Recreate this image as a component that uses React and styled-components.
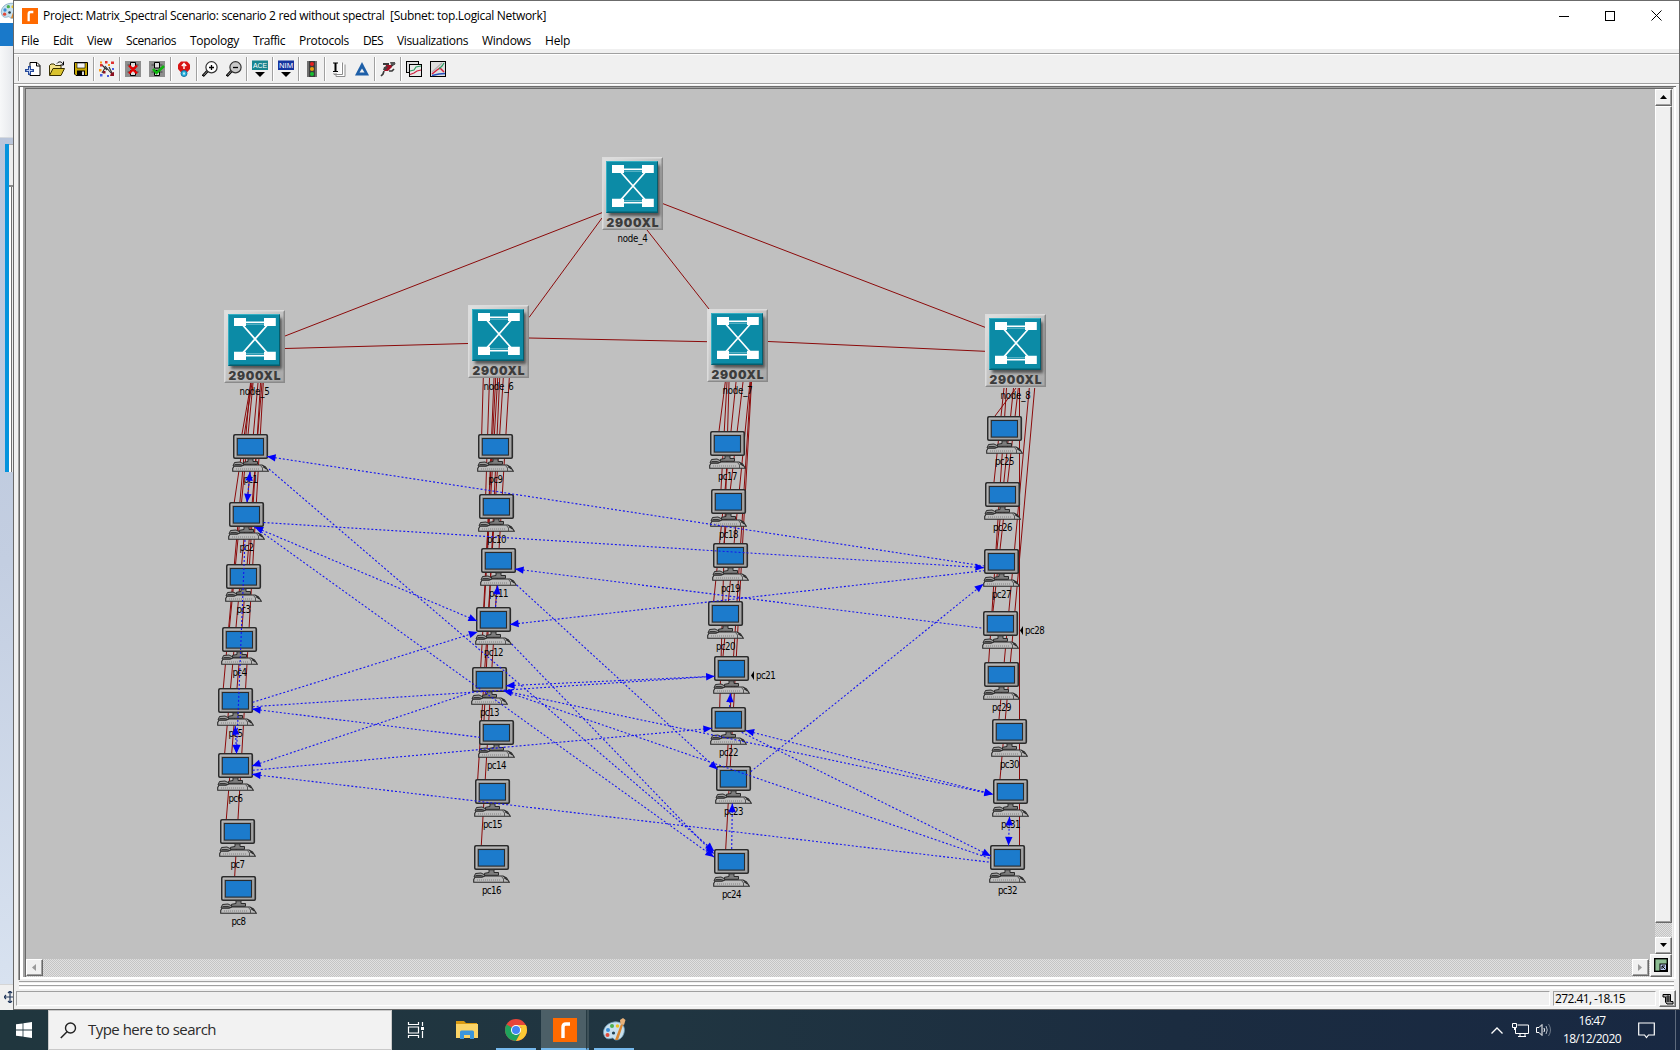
import React, { useLayoutEffect, useRef, useState } from "react";
import styled, { createGlobalStyle, css } from "styled-components";

const UI = `"Open Sans", "Noto Sans", sans-serif`;

const GlobalStyle = createGlobalStyle`
  * { box-sizing: border-box; }
  html, body { margin: 0; padding: 0; overflow: hidden; }
  body { font-family: ${UI}; font-size: 12px; color: #000; }
  svg { display: block; flex: none; }
`;

/* ---------- text that is tracked to a given width ---------- */

const FitSpan = styled.span`
  display: inline-block;
  white-space: pre;
  line-height: 1.15;
`;

function Fit({ w, children }) {
  const ref = useRef(null);
  const [spacing, setSpacing] = useState(0);
  useLayoutEffect(() => {
    const natural = ref.current.getBoundingClientRect().width;
    setSpacing((w - natural) / children.length);
  }, []);
  return (
    <FitSpan ref={ref} style={{ letterSpacing: `${spacing}px` }}>
      {children}
    </FitSpan>
  );
}

/* ---------- desktop ---------- */

const Desktop = styled.div`
  width: 1680px;
  height: 1050px;
  display: flex;
  flex-direction: column;
  background: #f0f0f0;
`;

const Stage = styled.div`
  height: 1010px;
  display: flex;
`;

const Behind = styled.div`
  width: 13px;
  display: flex;
  flex-direction: column;
  overflow: hidden;
`;
const BehindTitle = styled.div`
  height: 23px;
  background: #fff;
`;
const BehindTab = styled.div`
  height: 23px;
  background: #1979ca;
`;
const BehindRibbon = styled.div`
  height: 92px;
  background: linear-gradient(90deg, #f7f8f9, #e6e8ec);
  border-bottom: 1px solid #d5d9de;
`;
const BehindCanvas = styled.div`
  flex: 1;
  padding: 6px 0 0 5px;
  background: linear-gradient(#b9c5da, #c3cee1 50%, #d8e2f0);
`;
const BehindImage = styled.div`
  height: 328px;
  display: flex;
  flex-direction: column;
  border-left: 4px solid #0493dd;
  background: linear-gradient(90deg, #fff 0 2px, #6f6f6f 2px 3px, #f0f0f0 3px 4px);
`;
const BehindImageTop = styled.div`
  height: 43px;
  background: #ededed;
  border-bottom: 2px solid #888;
  border-top: 1px solid #aaa;
`;
const BehindStatus = styled.div`
  height: 26px;
  background: #f0f0f0;
  border-top: 1px solid #d5d5d5;
  padding: 6px 0 0 4px;
`;

/* ---------- window ---------- */

const Win = styled.div`
  width: 1667px;
  display: flex;
  flex-direction: column;
  border: 1px solid #6b6b6b;
  background: #f0f0f0;
`;
const TitleBar = styled.div`
  height: 29px;
  display: flex;
  align-items: center;
  padding-left: 8px;
  background: #fff;
`;
const TitleText = styled.div`
  flex: 1;
  padding: 1px 0 0 5px;
  display: flex;
`;
const Caption = styled.div`
  width: 46px;
  display: flex;
  justify-content: center;
`;
const MenuBar = styled.div`
  height: 19px;
  display: flex;
  padding: 4px 0 0 7px;
  gap: 14px;
  background: #fff;
`;
const Bar = styled.div`
  height: 32px;
  margin: 4px 0 1px;
  border-top: 1px solid #a0a0a0;
  border-bottom: 1px solid #fff;
  box-shadow: inset 0 1px #fff, inset 0 -1px #a0a0a0;
  display: flex;
  align-items: center;
  padding-left: 4px;
`;
const Group = styled.div`
  height: 24px;
  width: ${(p) => p.$w}px;
  display: flex;
  align-items: center;
  gap: 8px;
  padding-left: ${(p) => (p.$first ? 6 : 5)}px;
  border-left: 1px solid #a0a0a0;
  box-shadow: inset 1px 0 #fff;
`;

const Frame = styled.div`
  height: 894px;
  margin: 0 3px 0 4px;
  display: flex;
  flex-direction: column;
  border-left: 1px solid #a0a0a0;
  border-top: 1px solid #6b6b6b;
  box-shadow: inset 1px 0 #696969;
`;
const FrameInner = styled.div`
  height: 892px;
  margin-left: 1px;
  padding-left: 3px;
  border-right: 2px solid #fff;
  border-bottom: 2px solid #fff;
  display: flex;
  background: #fff;
`;
const Sunken = styled.div`
  flex: 1;
  display: grid;
  grid-template-columns: 1fr 17px;
  grid-template-rows: 1fr 18px;
  border-left: 2px solid #a0a0a0;
  border-top: 1px solid #a0a0a0;
  border-right: 1px solid #e3e3e3;
  box-shadow: inset 1px 0 #696969, inset 0 1px #696969;
  padding: 1px 1px 0 1px;
  background: #f0f0f0;
`;
const Rails = styled.div`
  height: 9px;
  margin: 0 5px 0 5px;
  padding-top: 1px;
`;
const Rail = styled.div`
  height: 4px;
  border-top: 1px solid #a0a0a0;
  border-bottom: 2px solid #fff;
`;

const checker = css`
  background: repeating-conic-gradient(#c4c4c4 0 25%, #e0e0e0 0 50%) 0 0 / 2px 2px;
`;
const VScroll = styled.div`
  display: flex;
  flex-direction: column;
  ${checker}
`;
const HScroll = styled.div`
  display: flex;
  justify-content: space-between;
  padding-right: 6px;
  ${checker}
`;
const raised = css`
  background: #f0f0f0;
  border: 1px solid #fff;
  border-right-color: #696969;
  border-bottom-color: #696969;
  box-shadow: inset -1px -1px #a0a0a0;
`;
const ArrowButton = styled.div`
  width: 17px;
  height: 17px;
  display: flex;
  align-items: center;
  justify-content: center;
  padding: 0 1px 1px 0;
  ${raised}
`;
const Thumb = styled.div`
  height: 817px;
  margin-bottom: 14px;
  ${raised}
`;
const Corner = styled.div`
  width: 22px;
  height: 23px;
  margin: -5px 0 0 -5px;
  display: flex;
  align-items: center;
  justify-content: center;
  padding: 0 1px 2px 0;
  z-index: 1;
  ${raised}
`;

const StatusRow = styled.div`
  height: 17px;
  margin-top: 2px;
  padding-left: 2px;
  display: flex;
  gap: 3px;
`;
const StatusCell = styled.div`
  height: 15px;
  width: ${(p) => p.$w}px;
  padding: 0 0 0 1px;
  display: flex;
  align-items: center;
  border: 1px solid #a0a0a0;
  border-right-color: #fff;
  border-bottom-color: #fff;
`;
const StatusButton = styled.div`
  width: 17px;
  height: 17px;
  margin: -1px 0 0 0;
  display: flex;
  align-items: center;
  justify-content: center;
  ${raised}
`;

/* ---------- network canvas ---------- */

const Canvas = styled.div`
  position: relative;
  background: #c0c0c0;
  overflow: hidden;
`;
const Layer = styled.svg`
  position: absolute;
  left: 0;
  top: 0;
`;
const Place = styled.div.attrs((p) => ({ style: { left: p.$x - 26, top: p.$y - 89 } }))`
  position: absolute;
  width: ${(p) => p.$w}px;
  display: flex;
  flex-direction: column;
  align-items: center;
`;
const NodeLabel = styled.div`
  margin-top: ${(p) => p.$top}px;
  font: 9.6px/1 "DejaVu Sans Condensed", "DejaVu Sans", sans-serif;
  white-space: nowrap;
`;
const SideLabel = styled.div`
  position: absolute;
  left: 38px;
  top: 14px;
  display: flex;
  align-items: center;
  gap: 2px;
  font: 9.6px/1 "DejaVu Sans Condensed", "DejaVu Sans", sans-serif;
`;

const SWITCHES = [
  ["node_4", 602, 157],
  ["node_5", 224, 310],
  ["node_6", 468, 305],
  ["node_7", 707, 309],
  ["node_8", 985, 314],
];

const PCS = [
  [232, 434], [228, 502], [225, 564], [221, 627], [217, 688], [217, 753], [219, 819], [220, 876],
  [477, 434], [478, 494], [480, 548], [475, 607], [471, 667], [478, 720], [474, 779], [473, 845],
  [709, 431], [710, 489], [712, 543], [707, 601], [713, 656], [710, 707], [715, 766], [713, 849],
  [986, 416], [984, 482], [983, 549], [982, 611], [983, 662], [991, 719], [992, 779], [989, 845],
];

const LINKS = [
  [285, 336, 602, 212.7], [529, 317.5, 602, 218], [285, 348.5, 468, 343.5],
  [529, 338, 707, 341.7], [768, 341.5, 985, 351.3], [647, 230, 709, 309], [663, 203.7, 985, 327.3],
  [251, 383, 242, 434], [252, 383, 234.3, 502], [260.5, 383, 249.5, 564], [253, 383, 229.5, 627],
  [250.5, 383, 223.3, 688], [258, 383, 224.7, 753], [262, 383, 226.3, 819], [263.3, 383, 234.7, 876],
  [483.3, 378, 481.7, 434], [489.5, 378, 485.7, 494], [494, 378, 487, 548], [495.7, 378, 483.7, 607],
  [497.7, 378, 480.7, 667], [499.7, 378, 484, 720], [503.3, 378, 477.7, 779], [509.3, 378, 481.3, 845],
  [725.3, 382, 719, 431], [727, 382, 721, 489], [743, 382, 724, 543], [736, 382, 713.7, 601],
  [750, 382, 723, 656], [729, 382, 719.7, 707], [750.8, 382, 726.7, 766], [751.5, 382, 725.7, 849],
  [1016, 388, 995, 416], [1004, 388, 994, 482], [1013.5, 388, 997, 549], [1018.3, 388, 993, 611],
  [1006.5, 388, 988.7, 662], [1029.3, 388, 999, 719], [1034.7, 388, 1000, 779], [1019.5, 388, 1019.5, 845],
];

/* x1, y1, x2, y2, arrow heads: "s" at the start, "e" at the end, "b" at both */
const FLOWS = [
  [267, 456.5, 984, 566, "s"], [269, 469, 714, 851, "e"], [250, 472, 247, 502.5, "b"],
  [263.5, 522.5, 984, 567.7, "e"], [254.5, 527, 477, 621, "b"], [254.5, 527, 714, 857, "e"],
  [245, 540, 236.5, 753.5, "e"], [235.3, 726, 236.5, 753.5, "b"], [252.7, 702.3, 477.5, 632, "e"],
  [252.7, 706.7, 714.7, 676.3, ""], [252, 709, 480, 737.3, "s"], [252, 766, 473.3, 691.7, "s"],
  [252.7, 770.3, 712, 728.3, "e"], [252, 774.3, 990.7, 862.3, "s"], [495.5, 607, 497.7, 585.5, "e"],
  [515, 569, 983.3, 628.3, "s"], [516.7, 585, 717.5, 769.5, "e"], [510, 624.5, 984, 570.7, "s"],
  [511.7, 644, 714, 854, "e"], [506, 685.7, 714.7, 676.3, "b"], [503.5, 690.8, 993, 794.3, "b"],
  [503.5, 690.8, 990.7, 858.7, ""], [741.7, 732.3, 990.7, 856, "e"], [745.5, 730.5, 993, 794.3, "b"],
  [729.7, 707, 730.3, 693.5, "e"], [750.7, 771.7, 983.3, 584, "e"], [731.7, 849, 732.3, 803.5, "e"],
  [1009.5, 816.7, 1008.5, 845.5, "b"],
];

function Head({ x, y, fx, fy }) {
  const a = (Math.atan2(y - fy, x - fx) * 180) / Math.PI;
  return <path d="M0 0L-8.600 -3.700V3.700Z" fill="#0000fa" transform={`translate(${x} ${y}) rotate(${a})`} />;
}

function SwitchIcon() {
  return (
    <svg width="61" height="73" viewBox="0 0 61 73">
      <defs>
        <linearGradient id="plate" x1="0" y1="0" x2="1" y2="1">
          <stop offset="0" stopColor="#e0e0e0" />
          <stop offset="0.5" stopColor="#c2c2c2" />
          <stop offset="1" stopColor="#a8a8a8" />
        </linearGradient>
        <filter id="soft" x="-20%" y="-20%" width="150%" height="150%">
          <feGaussianBlur stdDeviation="1.6" />
        </filter>
      </defs>
      <rect width="61" height="73" fill="#8a8a8a" />
      <path d="M0 0H61L59 2H2V71L0 73Z" fill="#dcdcdc" />
      <rect x="1.5" y="1.5" width="58" height="70" fill="url(#plate)" />
      <rect x="7" y="8" width="51" height="51" fill="#333" opacity="0.75" filter="url(#soft)" />
      <rect x="4" y="4" width="52" height="52" fill="#055d6d" />
      <path d="M4 4H56L54.5 5.5H5.5V54.5L4 56Z" fill="#35aec2" />
      <rect x="5" y="5" width="50" height="49.5" fill="#0c8ba6" />
      <path d="M22 12.3H40M22 45.7H40" stroke="#fff" strokeWidth="1.4" />
      <path d="M22 14.2H40M22 43.8H40" stroke="#8fd0dc" strokeWidth="0.8" />
      <path d="M16 12L46 46M46 12L16 46" stroke="#fff" strokeWidth="1.7" />
      <path d="M10 8H22V16H10ZM40 8H51.8V16H40ZM10 41.8H22V50H10ZM40 41.8H51.8V50H40Z" fill="#fff" />
      <text x="4.5" y="69.6" textLength="52" lengthAdjust="spacing" fill="#3c3c3c"
        fontFamily="Inter, sans-serif" fontWeight="900" fontSize="12">2900XL</text>
    </svg>
  );
}

function PcIcon() {
  return (
    <svg width="37" height="38" viewBox="0 0 37 38">
      <rect x="1.8" y="0.8" width="33.5" height="23.4" rx="1.2" fill="#a3a3a3" stroke="#2b2b2b" strokeWidth="1.6" />
      <path d="M3.2 23V2.2H34" fill="none" stroke="#c6c6c6" strokeWidth="0.8" />
      <rect x="5.3" y="4.5" width="26.2" height="16.6" fill="#1c7bcc" stroke="#2b2b2b" strokeWidth="1.1" />
      <path d="M1 32L2.500 28.500L8 28L12 30V32Z" fill="#a0a0a0" stroke="#2b2b2b" strokeWidth="1" />
      <path d="M2.500 30.500H8L11 31.500" fill="none" stroke="#2b2b2b" strokeWidth="0.9" />
      <path d="M16 24.800H21V27.500H25.500V30.300H11.500V28.300L16 27.500Z" fill="#7d7d7d" stroke="#2b2b2b" strokeWidth="1" />
      <path d="M0.700 37.300V34.500L2 32.300H9L12 31H30L33.500 33L36.400 37.300Z" fill="#bdbdbd" stroke="#2b2b2b" strokeWidth="1.100" />
      <path d="M28.500 31.500L30.500 34V37" fill="none" stroke="#4a4a4a" strokeWidth="0.900" />
      <path d="M31 32.500L34.500 35" stroke="#2b2b2b" strokeWidth="1.300" />
      <path d="M4 35H27" stroke="#7d7d7d" strokeWidth="0.900" strokeDasharray="1 1" />
    </svg>
  );
}

function NetworkCanvas() {
  return (
    <Canvas>
      <Layer width="1629" height="870" viewBox="26 89 1629 870">
        {LINKS.map(([a, b, c, d], i) => (
          <line key={i} x1={a} y1={b} x2={c} y2={d} stroke="#8b0a0a" strokeWidth="1" />
        ))}
      </Layer>
      {SWITCHES.map(([name, x, y]) => (
        <Place key={name} $x={x} $y={y} $w={61}>
          <SwitchIcon />
          <NodeLabel $top={3}><Fit w={30}>{name}</Fit></NodeLabel>
        </Place>
      ))}
      {PCS.map(([x, y], i) => {
        const name = `pc${i + 1}`;
        const side = i === 20 || i === 27;
        const text = <Fit w={i < 9 ? 14.2 : 19.2}>{name}</Fit>;
        return (
          <Place key={name} $x={x} $y={y} $w={37}>
            <PcIcon />
            {side ? (
              <SideLabel>
                <svg width="3" height="9"><path d="M0 4.500L3 0V9Z" /></svg>
                {text}
              </SideLabel>
            ) : (
              <NodeLabel $top={2}>{text}</NodeLabel>
            )}
          </Place>
        );
      })}
      <Layer width="1629" height="870" viewBox="26 89 1629 870">
        {FLOWS.map(([a, b, c, d, h], i) => (
          <g key={i}>
            <line x1={a} y1={b} x2={c} y2={d} stroke="#1414f0" strokeWidth="1.1" strokeDasharray="2 2" />
            {(h === "s" || h === "b") && <Head x={a} y={b} fx={c} fy={d} />}
            {(h === "e" || h === "b") && <Head x={c} y={d} fx={a} fy={b} />}
          </g>
        ))}
      </Layer>
    </Canvas>
  );
}

/* ---------- toolbar drawings ---------- */

const Ic = ({ children }) => (
  <svg width="16" height="18" viewBox="0 0 16 18">{children}</svg>
);

const NewIcon = () => (
  <Ic>
    <path d="M5 2.500H12L15 5.500V15.500H5Z" fill="#fff" stroke="#000" />
    <path d="M11.500 2.500V6H15" fill="none" stroke="#000" />
    <path d="M3 6H6V9H9V12H6V15H3V12H0V9H3Z" fill="#274b9b" />
    <path d="M4 7.500H5V10H7.500V11H5V13.500H4V11H1.500V10H4Z" fill="#b9cdf5" />
  </Ic>
);
const OpenIcon = () => (
  <Ic>
    <path d="M0.500 15V5.500L2 4H5L6.500 5.500H12V8" fill="#f3e28a" stroke="#3a3000" />
    <path d="M0.500 15.500L4 8.500H15.500L12 15.500Z" fill="#d9c22d" stroke="#3a3000" />
    <path d="M8 3.500C10 1 13 1.500 14 4.500M14.500 1.500V5H11.500" fill="none" stroke="#000" />
  </Ic>
);
const SaveIcon = () => (
  <Ic>
    <path d="M1.500 2.500H14.500V15.500H3L1.500 14Z" fill="#c8a800" stroke="#000" />
    <path d="M4 3H12V8H4Z" fill="#f5f5f5" stroke="#000" strokeWidth="0.600" />
    <path d="M4 10.500H12V15.500H4Z" fill="#000" />
    <path d="M9 11.500H11V15H9Z" fill="#ddd" />
  </Ic>
);
const TopologyIcon = () => (
  <Ic>
    <path d="M3 5L8 10M6 6L12 13M10 7L13 13M3 13L6 8" stroke="#333" strokeWidth="1.100" />
    <path d="M6 1H8.500V3.500H6ZM12 1.500H15V4H12ZM1 4H3.500V6.500H1Z" fill="#e03030" />
    <path d="M1 1.500H3V3.500H1ZM0 9H2.500V11.500H0ZM9 4H11V6H9Z" fill="#ff9c1a" />
    <path d="M1 14H3.500V16.500H1ZM8 15H10V17H8ZM13 8H15V10H13Z" fill="#4a5ce0" />
    <path d="M4 11H6.500V13.500H4ZM12 13L15 12V16H11Z" fill="#8c1020" />
  </Ic>
);
const CardBase = () => (
  <>
    <rect x="0" y="1" width="16" height="16" fill="#8e8e8e" />
    <path d="M2.500 5H13.500M2.500 12H13.500" stroke="#444" />
    <path d="M5.500 2.500H10.500V8H5.500ZM5.500 10.500H10.500V15.500H5.500Z" fill="#ddd" stroke="#000" />
  </>
);
const FailIcon = () => (
  <Ic><CardBase /><path d="M4 5.500L12 13.500M12 5.500L4 13.500" stroke="#e80000" strokeWidth="2.400" /></Ic>
);
const RecoverIcon = () => (
  <Ic><CardBase /><path d="M4 9L7.500 13L15 6" fill="none" stroke="#0db30d" strokeWidth="2.600" /></Ic>
);
const PinIcon = () => (
  <Ic>
    <path d="M5 1.500H11L14 4.500V9L10.500 13H5.500L2 9V4.500Z" fill="#d81414" />
    <path d="M8 9V4M5.800 6L8 3.600L10.200 6" fill="none" stroke="#fff" strokeWidth="1.400" />
    <circle cx="8" cy="13.500" r="3" fill="#26b5e0" stroke="#1b6fa0" />
    <path d="M8 12.500V14.500" stroke="#fff" strokeWidth="1.400" />
  </Ic>
);
const LensIcon = ({ plus }) => (
  <Ic>
    <path d="M5.500 11L0.800 16" stroke="#000" strokeWidth="2.600" />
    <path d="M5.500 11L1.500 15.300" stroke="#999" strokeWidth="1" />
    <circle cx="9.500" cy="7.300" r="5.600" fill={plus ? "#fff" : "#c9c9c9"} stroke="#333" strokeWidth="1.200" />
    <path d={plus ? "M7 7.500H12M9.500 5V10" : "M7 7.500H12"} stroke="#000" strokeWidth="1.300" />
  </Ic>
);
const BadgeIcon = ({ text, fill }) => (
  <Ic>
    <rect x="0" y="0.500" width="16" height="9.500" fill={fill} />
    <text x="1" y="8.300" textLength="14" lengthAdjust="spacingAndGlyphs" fontFamily="Liberation Sans, sans-serif" fontSize="8" fill="#fff">{text}</text>
    <path d="M3 12H13L8 17Z" fill="#000" />
  </Ic>
);
const LightIcon = () => (
  <Ic>
    <rect x="3" y="1" width="10" height="16" fill="#3c3c3c" />
    <path d="M3 1H5V17H3ZM11 1H13V17H11Z" fill="#6f6f6f" />
    <circle cx="8" cy="4" r="2" fill="#e82020" />
    <circle cx="8" cy="9" r="2" fill="#e8a010" />
    <circle cx="8" cy="14" r="2" fill="#16c030" />
  </Ic>
);
const PagesIcon = () => (
  <Ic>
    <path d="M6 5V16.500H15V4.500M4 4V14.500H12.500V2.500" fill="#fff" stroke="#8c8c8c" />
    <rect x="1" y="1" width="9.500" height="12" fill="#f4f4f4" />
    <path d="M3 3H8M3 11.500H8" stroke="#000" strokeWidth="1.200" />
    <path d="M5.500 3V11" stroke="#000" strokeWidth="2" />
  </Ic>
);
const DeltaIcon = () => (
  <Ic><path d="M8 2L15 15.500H1Z" fill="#1d5fa8" /><path d="M8 8.500L10.500 12.500H5.500Z" fill="#f0f0f0" /></Ic>
);
const RunIcon = () => (
  <Ic>
    <path d="M3 4H9M10 7L15 3" fill="none" stroke="#3a3a3a" strokeWidth="2" />
    <path d="M4 11L3 14L1 16M9 11L12 11L14 9" fill="none" stroke="#3a3a3a" strokeWidth="1.700" />
    <path d="M6 5L11 5L12 7L8 11L4 11Z" fill="#a31226" />
    <path d="M4 7L8 6L6 10L3 10Z" fill="#444" />
    <path d="M10 2H15V5H11Z" fill="#555" />
  </Ic>
);
const GraphsIcon = () => (
  <Ic>
    <rect x="0.500" y="1.500" width="12" height="11" fill="#ddd" stroke="#000" />
    <rect x="3.500" y="4.500" width="12" height="12" fill="#e9e9e9" stroke="#000" />
    <path d="M4 11L8 10L10 7L15 6" fill="none" stroke="#2c9c60" strokeWidth="1.200" />
    <path d="M4 14.500L8 13L11 11L15 10" fill="none" stroke="#d02040" strokeWidth="1.200" />
  </Ic>
);
const ChartIcon = () => (
  <Ic>
    <rect x="0.500" y="1.500" width="15" height="15" fill="#dedede" stroke="#000" />
    <path d="M2 12L12 3" stroke="#b0b0b0" strokeWidth="1.200" />
    <path d="M2 14L7 10L10 8L14 12" fill="none" stroke="#d82040" strokeWidth="1.500" />
    <path d="M9 9L12 6L14 3" fill="none" stroke="#2c9c60" strokeWidth="1.200" />
    <path d="M2 15.500L9 14L15 13.500" fill="none" stroke="#2450c0" strokeWidth="1.400" />
  </Ic>
);

const TOOL_GROUPS = [
  [75, [<NewIcon />, <OpenIcon />, <SaveIcon />]],
  [26, [<TopologyIcon />]],
  [51, [<FailIcon />, <RecoverIcon />]],
  [26, [<PinIcon />]],
  [50, [<LensIcon plus />, <LensIcon />]],
  [26, [<BadgeIcon text="ACE" fill="#18858f" />]],
  [26, [<BadgeIcon text="NIM" fill="#1634a0" />]],
  [26, [<LightIcon />]],
  [50, [<PagesIcon />, <DeltaIcon />]],
  [26, [<RunIcon />]],
  [60, [<GraphsIcon />, <ChartIcon />]],
];

const MENU = [
  ["File", 18], ["Edit", 20], ["View", 25], ["Scenarios", 50], ["Topology", 49], ["Traffic", 32],
  ["Protocols", 50], ["DES", 20], ["Visualizations", 71], ["Windows", 49], ["Help", 25],
];

const RLogo = ({ w, h }) => (
  <svg width={w} height={h} viewBox="0 0 24 24" preserveAspectRatio="none">
    <rect width="24" height="24" fill="#ff6a00" />
    <path d="M10 20V9Q10 6 13 6H17" fill="none" stroke="#fff" strokeWidth="3.400" />
  </svg>
);

const Palette = ({ s }) => (
  <svg width={s} height={s} viewBox="0 0 24 24">
    <path d="M12 4C4 5 0 12 2 17C4 23 9 20 11 20C13 24 20 22 22 15C24 8 19 3 12 4Z" fill="#c8e0ee" stroke="#6f9db8" strokeWidth="0.800" />
    <circle cx="6" cy="12" r="2" fill="#3b8fd8" />
    <circle cx="10" cy="8" r="2" fill="#4caf50" />
    <circle cx="15.500" cy="8" r="1.800" fill="#f0c020" />
    <circle cx="5.500" cy="17" r="2" fill="#e04a3a" />
    <circle cx="11.500" cy="15" r="1.600" fill="#23404f" />
    <path d="M13 22L19 6L21 7L16 22Z" fill="#d98632" />
    <path d="M18.500 6L18 2L21 0L23.500 2L22 7Z" fill="#e8b27a" />
  </svg>
);

/* ---------- taskbar ---------- */

const Taskbar = styled.div`
  height: 40px;
  display: flex;
  background: linear-gradient(90deg, #20363e, #203541 40%, #1b2c40 70%, #182842);
`;
const Start = styled.div`
  width: 48px;
  display: flex;
  align-items: center;
  justify-content: center;
`;
const Search = styled.div`
  width: 344px;
  display: flex;
  align-items: center;
  gap: 11px;
  padding-left: 11px;
  background: #f2f2f2;
  border: 1px solid #c9c9c9;
  font-size: 15px;
  color: #2b2b2b;
`;
const Task = styled.div`
  width: ${(p) => p.$w}px;
  margin-left: ${(p) => p.$ml || 0}px;
  display: flex;
  align-items: center;
  justify-content: center;
  background: ${(p) => (p.$active ? "#4c5f67" : "transparent")};
  border-bottom: 2px solid ${(p) => (p.$open ? "#76b9ed" : "transparent")};
  padding: 2px 0 0 ${(p) => p.$pl || 0}px;
`;
const TaskStack = styled.div`
  width: 3px;
  border-left: 1px solid #263a42;
  border-bottom: 2px solid #5e9ccb;
  background: #3d5058;
`;
const Tray = styled.div`
  margin-left: auto;
  display: flex;
  align-items: center;
  color: #fff;
`;
const Clock = styled.div`
  width: 76px;
  display: flex;
  flex-direction: column;
  align-items: center;
  gap: 4px;
  margin-top: -1px;
`;
const TrayItem = styled.div`
  width: ${(p) => p.$w}px;
  display: flex;
  justify-content: center;
`;
const Peek = styled.div`
  width: 5px;
  height: 40px;
  border-left: 1px solid #5e6a7c;
`;

export default function App() {
  return (
    <Desktop>
      <GlobalStyle />
      <Stage>
        <Behind>
          <BehindTitle><Palette s={20} /></BehindTitle>
          <BehindTab />
          <BehindRibbon />
          <BehindCanvas>
            <BehindImage><BehindImageTop /></BehindImage>
          </BehindCanvas>
          <BehindStatus>
            <svg width="12" height="12" viewBox="0 0 12 12">
              <path d="M0 6H12M6 0V12M4 2L6 0L8 2M4 10L6 12L8 10M2 4L0 6L2 8" fill="none" stroke="#23395d" strokeWidth="1.200" />
            </svg>
          </BehindStatus>
        </Behind>

        <Win>
          <TitleBar>
            <RLogo w={16} h={16} />
            <TitleText>
              <Fit w={503}>{"Project: Matrix_Spectral Scenario: scenario 2 red without spectral  [Subnet: top.Logical Network]"}</Fit>
            </TitleText>
            <Caption><svg width="10" height="10"><path d="M0 5.500H10" stroke="#000" /></svg></Caption>
            <Caption><svg width="10" height="10"><rect x="0.500" y="0.500" width="9" height="9" fill="none" stroke="#000" /></svg></Caption>
            <Caption><svg width="11" height="11"><path d="M0.500 0.500L10.500 10.500M10.500 0.500L0.500 10.500" stroke="#000" /></svg></Caption>
          </TitleBar>
          <MenuBar>
            {MENU.map(([t, w]) => <Fit key={t} w={w}>{t}</Fit>)}
          </MenuBar>
          <Bar>
            {TOOL_GROUPS.map(([w, icons], i) => (
              <Group key={i} $w={w} $first={i === 0}>
                {icons.map((icon, k) => <React.Fragment key={k}>{icon}</React.Fragment>)}
              </Group>
            ))}
          </Bar>

          <Frame>
            <FrameInner>
              <Sunken>
                <NetworkCanvas />
                <VScroll>
                  <ArrowButton><svg width="7" height="4"><path d="M3.500 0L7 4H0Z" /></svg></ArrowButton>
                  <Thumb />
                  <ArrowButton><svg width="7" height="4"><path d="M3.500 4L7 0H0Z" /></svg></ArrowButton>
                </VScroll>
                <HScroll>
                  <ArrowButton><svg width="4" height="7"><path d="M0 3.500L4 0V7Z" fill="#9a9a9a" /></svg></ArrowButton>
                  <ArrowButton><svg width="4" height="7"><path d="M4 3.500L0 0V7Z" fill="#9a9a9a" /></svg></ArrowButton>
                </HScroll>
                <Corner>
                  <svg width="14" height="14" viewBox="0 0 14 14">
                    <rect x="0.700" y="0.700" width="12.600" height="12.600" fill="#8dbd93" stroke="#000" strokeWidth="1.400" />
                    <rect x="6" y="6" width="6.500" height="6.500" fill="#b9c9f0" stroke="#000" />
                    <path d="M8 11V8H11M8 8L11.500 11.500" fill="none" stroke="#000" />
                  </svg>
                </Corner>
              </Sunken>
            </FrameInner>
          </Frame>
          <Rails><Rail /><Rail /></Rails>
          <StatusRow>
            <StatusCell $w={1534} />
            <StatusCell $w={103}><Fit w={70}>272.41, -18.15</Fit></StatusCell>
            <StatusButton>
              <svg width="12" height="12" viewBox="0 0 12 12">
                <path d="M1 1.500H8.500V8.500H11V11H5L3.500 9V4H1Z" fill="#aaa" stroke="#000" />
                <path d="M4 4H8M4 6H8M4 8H8M6 2V9" stroke="#000" strokeWidth="0.800" />
              </svg>
            </StatusButton>
          </StatusRow>
        </Win>
      </Stage>

      <Taskbar>
        <Start>
          <svg width="16" height="16" viewBox="0 0 16 16">
            <path d="M0 2.300L6.600 1.400V7.600H0ZM7.400 1.300L16 0V7.600H7.400ZM0 8.400H6.600V14.600L0 13.700ZM7.400 8.400H16V16L7.400 14.700Z" fill="#fff" />
          </svg>
        </Start>
        <Search>
          <svg width="17" height="17" viewBox="0 0 17 17">
            <circle cx="10.500" cy="6" r="5" fill="none" stroke="#222" strokeWidth="1.400" />
            <path d="M7 9.800L0.800 16" stroke="#222" strokeWidth="1.500" />
          </svg>
          <Fit w={128}>Type here to search</Fit>
        </Search>
        <Task $w={47}>
          <svg width="17" height="16" viewBox="0 0 17 16">
            <path d="M1.500 0V2.500H11.500V0M1.500 16V13.500H11.500V16M1.500 5H11.500V11H1.500ZM15.500 0V4M15.500 9V16" fill="none" stroke="#fff" strokeWidth="1.200" />
            <rect x="14" y="5" width="3" height="3" fill="#fff" />
          </svg>
        </Task>
        <Task $w={40} $ml={8}>
          <svg width="22" height="18" viewBox="0 0 22 18">
            <path d="M0 0H8L10 2H21V6H0Z" fill="#d99a12" />
            <path d="M1 3H22V17H0V3Z" fill="#fbd467" />
            <path d="M4 18V11Q4 9.500 5.500 9.500H16.500Q18 9.500 18 11V18H14V14H8V18Z" fill="#3a96dd" />
          </svg>
        </Task>
        <Task $w={40} $ml={9} $open>
          <svg width="22" height="22" viewBox="-11 -11 22 22">
            <circle r="11" fill="#e8463a" />
            <path d="M0 0L-9.500 -5.500A11 11 0 0 0 0 11L5 2Z" fill="#1fa35c" />
            <path d="M0 0L9.800 -5A11 11 0 0 1 0 11L4.500 3Z" fill="#fcc934" />
            <path d="M0 -5H9.800L10.500 -3H4Z" fill="#fcc934" />
            <circle r="5" fill="#fff" />
            <circle r="4" fill="#4285f4" />
          </svg>
        </Task>
        <Task $w={45} $ml={5} $pl={3} $open $active><RLogo w={24} h={24} /></Task>
        <TaskStack />
        <Task $w={40} $ml={5} $open><Palette s={24} /></Task>

        <Tray>
          <TrayItem $w={20}><svg width="12" height="7"><path d="M0.500 6.500L6 1L11.500 6.500" fill="none" stroke="#fff" strokeWidth="1.300" /></svg></TrayItem>
          <TrayItem $w={27}>
            <svg width="17" height="14" viewBox="0 0 17 14">
              <path d="M5.500 2H16.500V10.500H3.500V5M8 10.500V13M13 10.500V13M6 13.500H14" fill="none" stroke="#fff" />
              <path d="M0.500 0.500H4.500V4.500H0.500ZM2.500 4.500V7" fill="none" stroke="#fff" />
            </svg>
          </TrayItem>
          <TrayItem $w={20}>
            <svg width="17" height="14" viewBox="0 0 17 14">
              <path d="M0.500 4.500H3L6 1.500V12.500L3 9.500H0.500Z" fill="none" stroke="#fff" />
              <path d="M8 5Q9 7 8 9" fill="none" stroke="#fff" />
              <path d="M10 3Q12.500 7 10 11" fill="none" stroke="#b4bcc6" />
              <path d="M12.500 1Q16.500 7 12.500 13" fill="none" stroke="#6d7888" />
            </svg>
          </TrayItem>
          <Clock>
            <Fit w={27}>16:47</Fit>
            <Fit w={58}>18/12/2020</Fit>
          </Clock>
          <TrayItem $w={33}>
            <svg width="17" height="17" viewBox="0 0 17 17">
              <path d="M0.700 1H16.300V13H10.500L8.500 15.500L6.500 13H0.700Z" fill="none" stroke="#fff" strokeWidth="1.200" />
            </svg>
          </TrayItem>
          <TrayItem $w={12} />
          <Peek />
        </Tray>
      </Taskbar>
    </Desktop>
  );
}
